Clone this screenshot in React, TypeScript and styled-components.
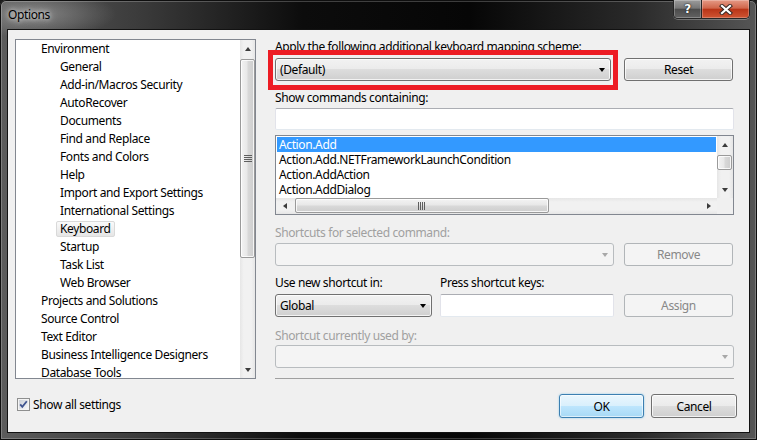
import React from "react";
import styled, { createGlobalStyle, css } from "styled-components";

const GlobalStyle = createGlobalStyle`
  html, body {
    margin: 0;
    padding: 0;
    background: #1b1b1b;
  }
  body {
    font-family: "Noto Sans", "Segoe UI", sans-serif;
    font-size: 12px;
    letter-spacing: -0.38px;
    color: #000;
  }
  * {
    box-sizing: border-box;
  }
`;

const treeItems: { label: string; level: number; selected?: boolean }[] = [
    { label: "Environment", level: 0 },
    { label: "General", level: 1 },
    { label: "Add-in/Macros Security", level: 1 },
    { label: "AutoRecover", level: 1 },
    { label: "Documents", level: 1 },
    { label: "Find and Replace", level: 1 },
    { label: "Fonts and Colors", level: 1 },
    { label: "Help", level: 1 },
    { label: "Import and Export Settings", level: 1 },
    { label: "International Settings", level: 1 },
    { label: "Keyboard", level: 1, selected: true },
    { label: "Startup", level: 1 },
    { label: "Task List", level: 1 },
    { label: "Web Browser", level: 1 },
    { label: "Projects and Solutions", level: 0 },
    { label: "Source Control", level: 0 },
    { label: "Text Editor", level: 0 },
    { label: "Business Intelligence Designers", level: 0 },
    { label: "Database Tools", level: 0 },
];

const commands = ["Action.Add", "Action.Add.NETFrameworkLaunchCondition", "Action.AddAction", "Action.AddDialog"];

type Dir = "up" | "down" | "left" | "right";

const Arrow = styled.span<{ $dir: Dir; $color?: string }>`
    width: 0;
    height: 0;
    ${({ $dir, $color = "#3c3c3c" }) => {
        switch ($dir) {
            case "up":
                return css`
                    border-left: 3.5px solid transparent;
                    border-right: 3.5px solid transparent;
                    border-bottom: 4px solid ${$color};
                `;
            case "down":
                return css`
                    border-left: 3.5px solid transparent;
                    border-right: 3.5px solid transparent;
                    border-top: 4px solid ${$color};
                `;
            case "left":
                return css`
                    border-top: 3.5px solid transparent;
                    border-bottom: 3.5px solid transparent;
                    border-right: 4px solid ${$color};
                `;
            default:
                return css`
                    border-top: 3.5px solid transparent;
                    border-bottom: 3.5px solid transparent;
                    border-left: 4px solid ${$color};
                `;
        }
    }}
`;

const ScrollBar = styled.div<{ $horizontal?: boolean }>`
    display: flex;
    flex-direction: ${({ $horizontal }) => ($horizontal ? "row" : "column")};
    background: ${({ $horizontal }) =>
        $horizontal
            ? "linear-gradient(#e6e6e6, #f1f1f1 25%, #f1f1f1 75%, #e6e6e6)"
            : "linear-gradient(to right, #e6e6e6, #f1f1f1 25%, #f1f1f1 75%, #e6e6e6)"};
`;

const ScrollButton = styled.div`
    flex: 0 0 17px;
    display: flex;
    align-items: center;
    justify-content: center;
`;

const ScrollTrack = styled.div<{ $horizontal?: boolean }>`
    flex: 1;
    display: flex;
    flex-direction: ${({ $horizontal }) => ($horizontal ? "row" : "column")};
`;

const Thumb = styled.div<{ $horizontal?: boolean; $offset: number; $size: number }>`
    display: flex;
    align-items: center;
    justify-content: center;
    border: 1px solid #9a9a9a;
    border-radius: 2px;
    box-shadow: inset 0 0 0 1px rgba(255, 255, 255, 0.8);
    ${({ $horizontal, $offset, $size }) =>
        $horizontal
            ? css`
                  margin-left: ${$offset}px;
                  width: ${$size}px;
                  height: 15px;
                  background: linear-gradient(#f3f3f3, #e8e8e8 45%, #d8d8d8 55%, #cdcdcd);
              `
            : css`
                  margin-top: ${$offset}px;
                  height: ${$size}px;
                  width: 15px;
                  background: linear-gradient(to right, #f3f3f3, #e8e8e8 45%, #d8d8d8 55%, #cdcdcd);
              `}
`;

const Grip: React.FC<{ horizontal?: boolean }> = ({ horizontal }) =>
    horizontal ? (
        <svg width="8" height="8" viewBox="0 0 8 8">
            {[0, 2, 4, 6].map((x) => (
                <rect key={x} x={x} y={0} width={1} height={8} fill="#5e5e5e" />
            ))}
        </svg>
    ) : (
        <svg width="8" height="8" viewBox="0 0 8 8">
            {[0, 2, 4, 6].map((y) => (
                <rect key={y} x={0} y={y} width={8} height={1} fill="#5e5e5e" />
            ))}
        </svg>
    );

const VerticalScroll: React.FC<{ offset: number; size: number; grip?: boolean }> = ({ offset, size, grip }) => (
    <ScrollBar>
        <ScrollButton>
            <Arrow $dir="up" />
        </ScrollButton>
        <ScrollTrack>
            <Thumb $offset={offset} $size={size}>
                {grip && <Grip />}
            </Thumb>
        </ScrollTrack>
        <ScrollButton>
            <Arrow $dir="down" />
        </ScrollButton>
    </ScrollBar>
);

const HorizontalScroll: React.FC<{ offset: number; size: number }> = ({ offset, size }) => (
    <ScrollBar $horizontal>
        <ScrollButton>
            <Arrow $dir="left" />
        </ScrollButton>
        <ScrollTrack $horizontal>
            <Thumb $horizontal $offset={offset} $size={size}>
                <Grip horizontal />
            </Thumb>
        </ScrollTrack>
        <ScrollButton>
            <Arrow $dir="right" />
        </ScrollButton>
    </ScrollBar>
);

const App: React.FC = () => (
    <>
        <GlobalStyle />
        <Window>
            <TitleBar>
                <Title>Options</Title>
                <CaptionGroup>
                    <HelpButton>?</HelpButton>
                    <CloseButton>
                        <svg width="14" height="11" viewBox="0 0 14 11">
                            <path d="M3 2 L11 9 M11 2 L3 9" stroke="#3a2a26" strokeWidth="4.2" strokeLinecap="square" />
                            <path d="M3 2 L11 9 M11 2 L3 9" stroke="#fff" strokeWidth="2.2" strokeLinecap="square" />
                        </svg>
                    </CloseButton>
                </CaptionGroup>
            </TitleBar>
            <Client>
                <Main>
                    <Tree>
                        <TreeList>
                            {treeItems.map((item) => (
                                <TreeItem key={item.label} $level={item.level}>
                                    <TreeLabel $selected={item.selected}>{item.label}</TreeLabel>
                                </TreeItem>
                            ))}
                        </TreeList>
                        <VerticalScroll offset={2} size={199} grip />
                    </Tree>
                    <Pane>
                        <Label>Apply the following additional keyboard mapping scheme:</Label>
                        <Row $mt={4}>
                            <Combo $width={336}>
                                (Default)
                                <Arrow $dir="down" $color="#000" />
                            </Combo>
                            <Button $width={109} $ml={13}>
                                Reset
                            </Button>
                            <Highlight />
                        </Row>
                        <Label $mt={9}>Show commands containing:</Label>
                        <TextBox $width={459} $mt={3} />
                        <ListBox>
                            <ListRows>
                                {commands.map((c, i) => (
                                    <ListRow key={c} $selected={i === 0}>
                                        {c}
                                    </ListRow>
                                ))}
                            </ListRows>
                            <VerticalScroll offset={2} size={15} />
                            <HorizontalScroll offset={2} size={254} />
                            <Corner />
                        </ListBox>
                        <Label $mt={10} $disabled>
                            Shortcuts for selected command:
                        </Label>
                        <Row $mt={3}>
                            <Combo $width={339} $disabled>
                                <span />
                                <Arrow $dir="down" $color="#a8a8a8" />
                            </Combo>
                            <Button $width={109} $ml={10} $disabled>
                                Remove
                            </Button>
                        </Row>
                        <Row $mt={9}>
                            <Label $width={165}>Use new shortcut in:</Label>
                            <Label>Press shortcut keys:</Label>
                        </Row>
                        <Row $mt={4}>
                            <Combo $width={157}>
                                Global
                                <Arrow $dir="down" $color="#000" />
                            </Combo>
                            <TextBox $width={174} $ml={8} $height={23} />
                            <Button $width={109} $ml={10} $disabled>
                                Assign
                            </Button>
                        </Row>
                        <Label $mt={11} $disabled>
                            Shortcut currently used by:
                        </Label>
                        <Row $mt={2}>
                            <Combo $width={459} $disabled>
                                <span />
                                <Arrow $dir="down" $color="#a8a8a8" />
                            </Combo>
                        </Row>
                        <Separator />
                    </Pane>
                </Main>
                <Footer>
                    <CheckRow>
                        <svg width="13" height="13" viewBox="0 0 13 13">
                            <defs>
                                <linearGradient id="cbFill" x1="0" y1="0" x2="1" y2="1">
                                    <stop offset="0" stopColor="#cbd0d8" />
                                    <stop offset="1" stopColor="#f7f8fa" />
                                </linearGradient>
                            </defs>
                            <rect x="0.5" y="0.5" width="12" height="12" fill="#f4f4f4" stroke="#8e8f8f" />
                            <rect x="2" y="2" width="9" height="9" fill="url(#cbFill)" />
                            <path d="M3.2 6.4 L5.3 8.9 L9.8 3.2" stroke="#3f5490" strokeWidth="1.8" fill="none" />
                        </svg>
                        <span>Show all settings</span>
                    </CheckRow>
                    <Buttons>
                        <Button $width={85} $height={24} $default>
                            OK
                        </Button>
                        <Button $width={86} $height={24} $ml={7}>
                            Cancel
                        </Button>
                    </Buttons>
                </Footer>
            </Client>
        </Window>
    </>
);

export default App;

const Window = styled.div`
    width: 757px;
    height: 440px;
    display: flex;
    flex-direction: column;
    overflow: hidden;
    border-radius: 6px 6px 0 0;
    background: radial-gradient(ellipse 80px 24px at 36px 14px, rgba(170, 170, 170, 0.55), transparent),
        linear-gradient(to right, #5c5c5c 0%, #3c3c3c 18%, #0c0c0c 40%, #060606 62%, #2a2a2a 84%, #565656 100%);
    box-shadow: inset 0 0 0 1px #0e0e0e, inset 0 0 0 2px rgba(255, 255, 255, 0.22);
`;

const TitleBar = styled.div`
    flex: 0 0 29px;
    display: flex;
    justify-content: space-between;
    align-items: flex-start;
    padding: 0 7px 0 8px;
`;

const Title = styled.div`
    line-height: 30px;
    color: #000;
    text-shadow: 0 0 5px rgba(255, 255, 255, 0.9), 0 0 10px rgba(255, 255, 255, 0.6);
`;

const CaptionGroup = styled.div`
    display: flex;
    height: 19px;
    border: 1px solid #262626;
    border-top: none;
    border-radius: 0 0 5px 5px;
    overflow: hidden;
    box-shadow: 0 1px 0 rgba(255, 255, 255, 0.28);
`;

const CaptionButton = styled.div`
    display: flex;
    align-items: center;
    justify-content: center;
    box-shadow: inset 0 0 0 1px rgba(255, 255, 255, 0.25);
`;

const HelpButton = styled(CaptionButton)`
    width: 28px;
    border-right: 1px solid #262626;
    background: linear-gradient(#9c9c9c, #777 45%, #4c4c4c 52%, #626262);
    color: #fff;
    font-family: "DejaVu Sans", sans-serif;
    font-weight: bold;
    font-size: 12px;
    text-shadow: 0 0 2px #222, 0 0 1px #000;
`;

const CloseButton = styled(CaptionButton)`
    width: 47px;
    background: linear-gradient(#e59a86, #d0664b 45%, #b93518 52%, #cf5533);
`;

const Client = styled.div`
    flex: 1;
    margin: 0 8px 8px 8px;
    padding: 9px 0 0 7px;
    display: flex;
    flex-direction: column;
    background: #f0f0f0;
    box-shadow: 0 0 0 1px #121212;
`;

const Main = styled.div`
    display: flex;
    gap: 19px;
    height: 340px;
`;

const Tree = styled.div`
    width: 241px;
    height: 340px;
    display: flex;
    border: 1px solid #828790;
    background: #fff;
`;

const TreeList = styled.div`
    flex: 1;
    overflow: hidden;
`;

const TreeItem = styled.div<{ $level: number }>`
    height: 18px;
    display: flex;
    align-items: center;
    padding-left: ${({ $level }) => ($level ? 40 : 21)}px;
    white-space: nowrap;
`;

const TreeLabel = styled.span<{ $selected?: boolean }>`
    height: 16px;
    line-height: 14px;
    padding: 0 3px;
    border: 1px solid transparent;
    border-radius: 2px;
    ${({ $selected }) =>
        $selected &&
        css`
            background: linear-gradient(#fafafa, #e5e5e5);
            border-color: #d9d9d9;
        `}
`;

const Pane = styled.div`
    width: 459px;
    display: flex;
    flex-direction: column;
`;

const Label = styled.div<{ $mt?: number; $disabled?: boolean; $width?: number }>`
    height: 15px;
    line-height: 15px;
    margin-top: ${({ $mt = 0 }) => $mt}px;
    width: ${({ $width }) => ($width ? `${$width}px` : "auto")};
    color: ${({ $disabled }) => ($disabled ? "#a0a0a0" : "#000")};
    white-space: nowrap;
`;

const Row = styled.div<{ $mt?: number }>`
    position: relative;
    display: flex;
    margin-top: ${({ $mt = 0 }) => $mt}px;
`;

const Highlight = styled.div`
    position: absolute;
    top: -8px;
    left: -7px;
    width: 350px;
    height: 40px;
    border: 5px solid #ed1c24;
    pointer-events: none;
`;

const Combo = styled.div<{ $width: number; $disabled?: boolean }>`
    width: ${({ $width }) => $width}px;
    height: 23px;
    display: flex;
    align-items: center;
    justify-content: space-between;
    padding: 0 5px 0 4px;
    border-radius: 3px;
    ${({ $disabled }) =>
        $disabled
            ? css`
                  border: 1px solid #b8bcbf;
                  background: #f4f4f4;
              `
            : css`
                  border: 1px solid #707070;
                  background: linear-gradient(#f2f2f2, #ebebeb 49%, #dddddd 50%, #cfcfcf);
                  box-shadow: inset 0 0 0 1px rgba(255, 255, 255, 0.75);
              `}
`;

const Button = styled.div<{ $width: number; $height?: number; $ml?: number; $disabled?: boolean; $default?: boolean }>`
    width: ${({ $width }) => $width}px;
    height: ${({ $height = 23 }) => $height}px;
    margin-left: ${({ $ml = 0 }) => $ml}px;
    display: flex;
    align-items: center;
    justify-content: center;
    border-radius: 3px;
    ${({ $disabled, $default }) =>
        $disabled
            ? css`
                  border: 1px solid #b1b5b8;
                  background: #f4f4f4;
                  color: #888;
              `
            : $default
            ? css`
                  border: 1px solid #3c7fb1;
                  background: linear-gradient(#eaf6fd, #d9f0fc 49%, #bee6fd 50%, #a7d9f5);
                  box-shadow: inset 0 0 0 1px rgba(255, 255, 255, 0.6), 0 0 2px rgba(60, 170, 230, 0.6);
              `
            : css`
                  border: 1px solid #707070;
                  background: linear-gradient(#f2f2f2, #ebebeb 49%, #dddddd 50%, #cfcfcf);
                  box-shadow: inset 0 0 0 1px rgba(255, 255, 255, 0.75);
              `}
`;

const TextBox = styled.div<{ $width: number; $height?: number; $mt?: number; $ml?: number }>`
    width: ${({ $width }) => $width}px;
    height: ${({ $height = 22 }) => $height}px;
    margin-top: ${({ $mt = 0 }) => $mt}px;
    margin-left: ${({ $ml = 0 }) => $ml}px;
    background: #fff;
    border: 1px solid #e2e3ea;
    border-top-color: #abadb3;
    border-bottom-color: #e3e9ef;
    border-radius: 2px;
`;

const ListBox = styled.div`
    margin-top: 5px;
    width: 459px;
    height: 80px;
    display: grid;
    grid-template-columns: 1fr 16px;
    grid-template-rows: 1fr 16px;
    border: 1px solid #828790;
    background: #fff;
`;

const ListRows = styled.div`
    padding: 1px;
    overflow: hidden;
`;

const ListRow = styled.div<{ $selected?: boolean }>`
    height: 15px;
    line-height: 15px;
    padding-left: 2px;
    white-space: nowrap;
    overflow: hidden;
    background: ${({ $selected }) => ($selected ? "#3399ff" : "transparent")};
    color: ${({ $selected }) => ($selected ? "#fff" : "#000")};
`;

const Corner = styled.div`
    background: #f0f0f0;
`;

const Separator = styled.div`
    margin-top: 10px;
    height: 1px;
    background: #a0a0a0;
`;

const Footer = styled.div`
    display: flex;
    align-items: center;
    justify-content: space-between;
    margin-top: 15px;
    padding: 0 12px 0 2px;
`;

const CheckRow = styled.div`
    display: flex;
    align-items: center;
    gap: 3px;
    line-height: 15px;
    margin-bottom: 3px;
`;

const Buttons = styled.div`
    display: flex;
`;
